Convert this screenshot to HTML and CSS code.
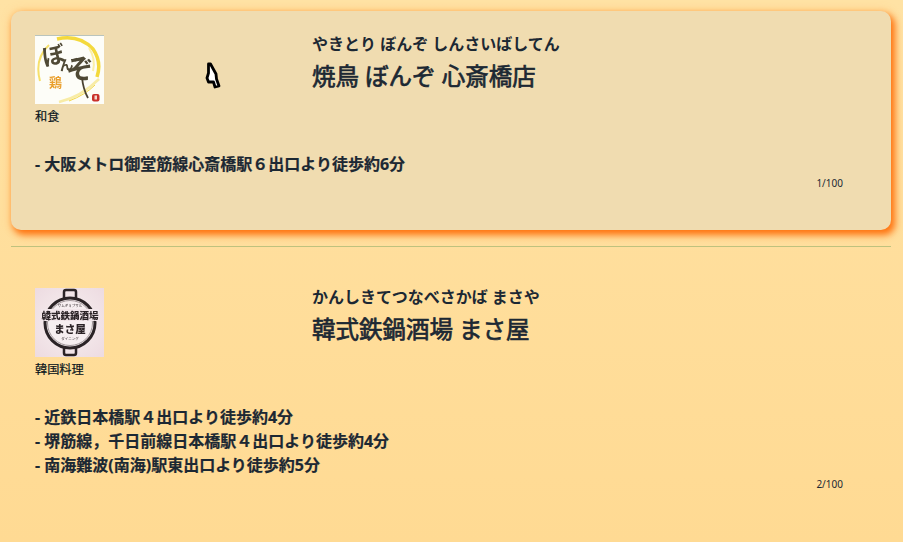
FILE: index.html
```html
<!DOCTYPE html>
<html lang="ja">
<head>
    <meta charset="UTF-8">
    <meta name="viewport" content="width=device-width, initial-scale=1.0">
    <title>お店一覧</title>
    <link rel="stylesheet" href="styles.css">
</head>
<body>
    <div class="shop shop-active">
        <div class="shop-head">
            <div class="shop-side">
                <svg class="logo" viewBox="0 0 69 69">
                    <rect width="69" height="69" fill="#fdfdf8"/>
                    <rect width="69" height="1" fill="#b9c4bd"/>
                    <path d="M5 46 Q-1 24 14 10" fill="none" stroke="#f6e06a" stroke-width="2"/>
                    <path d="M22 4 Q44 -1 58 14 Q67 27 62 42" fill="none" stroke="#f4d93c" stroke-width="3.5"/>
                    <path d="M54 13 Q61 24 58 36" fill="none" stroke="#fbefa8" stroke-width="2"/>
                    <path d="M24 67 Q46 62 64 44" fill="none" stroke="#f8eca6" stroke-width="2.5"/>
                    <path d="M34 66 Q50 60 60 50" fill="none" stroke="#f2d84a" stroke-width="1"/>
                    <text class="logo-brush" x="9" y="31" transform="rotate(-12 9 31)">ぼ</text>
                    <text class="logo-brush logo-brush-small" x="25" y="36" transform="rotate(-8 25 36)">ん</text>
                    <text class="logo-brush logo-brush-big" x="33" y="46" transform="rotate(-8 33 46)">ぞ</text>
                    <path d="M47 42 Q48 54 53 63" fill="none" stroke="#4a4232" stroke-width="1.8"/>
                    <text class="logo-chicken" x="14" y="52">鶏</text>
                    <rect x="57" y="59" width="7.5" height="7.5" rx="2" fill="#c9302c"/>
                    <rect x="59.5" y="60.5" width="2.5" height="4" fill="#f4d8d0"/>
                </svg>
                <div class="genre">和食</div>
            </div>
            <div class="shop-title">
                <div class="kana">やきとり ぼんぞ しんさいばしてん</div>
                <div class="name">焼鳥 ぼんぞ 心斎橋店</div>
            </div>
        </div>
        <div class="access">
            <div>- 大阪メトロ御堂筋線心斎橋駅６出口より徒歩約6分</div>
        </div>
        <div class="count">1/100</div>
    </div>

    <hr class="divider">

    <div class="shop">
        <div class="shop-head">
            <div class="shop-side">
                <svg class="logo" viewBox="0 0 69 69">
                    <defs>
                        <radialGradient id="pink" cx="0.5" cy="0.5" r="0.7">
                            <stop offset="0" stop-color="#f8f1f1"/>
                            <stop offset="1" stop-color="#eddbe1"/>
                        </radialGradient>
                    </defs>
                    <rect width="69" height="69" fill="url(#pink)"/>
                    <path d="M29 10 V4 Q29 2 31 2 H39 Q41 2 41 4 V10" fill="none" stroke="#2b2326" stroke-width="2.5"/>
                    <path d="M29 60 V65 Q29 67 31 67 H39 Q41 67 41 65 V60" fill="none" stroke="#2b2326" stroke-width="2.5"/>
                    <circle cx="35" cy="35" r="25" fill="#f6eef0" stroke="#2b2326" stroke-width="3"/>
                    <circle cx="35" cy="35" r="22.5" fill="none" stroke="#8a7f83" stroke-width="0.8"/>
                    <rect x="6" y="21" width="58" height="12" fill="#f2e6ea"/>
                    <text class="logo-small" x="35" y="19" text-anchor="middle">サムギョプサル</text>
                    <text class="logo-pot" x="35" y="31" text-anchor="middle">韓式鉄鍋酒場</text>
                    <text class="logo-pot logo-pot-big" x="35" y="45" text-anchor="middle">まさ屋</text>
                    <text class="logo-small" x="35" y="52" text-anchor="middle">ダイニング</text>
                </svg>
                <div class="genre">韓国料理</div>
            </div>
            <div class="shop-title">
                <div class="kana">かんしきてつなべさかば まさや</div>
                <div class="name">韓式鉄鍋酒場 まさ屋</div>
            </div>
        </div>
        <div class="access">
            <div>- 近鉄日本橋駅４出口より徒歩約4分</div>
            <div>- 堺筋線，千日前線日本橋駅４出口より徒歩約4分</div>
            <div>- 南海難波(南海)駅東出口より徒歩約5分</div>
        </div>
        <div class="count">2/100</div>
    </div>

    <svg class="cursor" viewBox="0 0 16 28">
        <path d="M3.5 3 L5.5 3 L11 13 L11.5 18 L14 25 L10 26 L8.5 21 L3.5 21 L2 17 L3.5 12 Z" fill="#fff" stroke="#000" stroke-width="2.8" stroke-linejoin="round"/>
    </svg>
</body>
</html>
```

FILE: styles.css
```css
html {
    height: 100%;
}
body {
    margin: 0;
    padding: 11px 12px 0 11px;
    height: 542px;
    box-sizing: border-box;
    overflow: hidden;
    position: relative;
    background: linear-gradient(to bottom, #ffe2a4 0%, #ffda93 100%);
    font-family: "Noto Sans", "Noto Sans CJK JP", sans-serif;
    color: #1c2833;
}
.shop {
    padding: 24px 48px 24px 24px;
    border-radius: 10px;
}
.shop-active {
    height: 219px;
    box-sizing: border-box;
    background-color: #f0dcb0;
    box-shadow: 3px 4px 7px 1px #ff7410, 0 0 8px rgba(255, 190, 100, 0.5);
}
.shop-head {
    display: flex;
}
.shop-side {
    width: 277px;
    flex-shrink: 0;
}
.logo {
    display: block;
    width: 69px;
    height: 69px;
    filter: blur(0.3px);
}
.genre {
    margin-top: 4px;
    font-size: 12.2px;
    line-height: 18px;
    color: #0b1620;
    -webkit-text-stroke: 0.2px #0b1620;
}
.shop-title {
    margin-top: -3px;
}
.kana {
    font-size: 16px;
    font-weight: 700;
    line-height: 24px;
}
.name {
    margin-top: 4px;
    font-size: 23.5px;
    font-weight: 400;
    line-height: 32px;
    -webkit-text-stroke: 0.7px #1c2833;
}
.access {
    margin-top: 26px;
    font-size: 16px;
    font-weight: 700;
    line-height: 24px;
    -webkit-text-stroke: 0.2px #1c2833;
}
.count {
    font-size: 10px;
    line-height: 14px;
    text-align: right;
}
.divider {
    height: 1px;
    margin: 16px 0 17px;
    border: none;
    background-color: #bfc27e;
}
.logo-brush {
    font-size: 23px;
    font-weight: 700;
    fill: #4f4935;
}
.logo-brush-small {
    font-size: 14px;
}
.logo-brush-big {
    font-size: 28px;
}
.logo-chicken {
    font-size: 13px;
    font-weight: 700;
    fill: #eaa02e;
}
.logo-pot {
    font-size: 9.5px;
    font-weight: 900;
    fill: #2b2326;
}
.logo-pot-big {
    font-size: 10.5px;
}
.logo-small {
    font-size: 3.5px;
    fill: #2b2326;
}
.cursor {
    position: absolute;
    left: 205px;
    top: 61px;
    width: 16px;
    height: 28px;
}
```
